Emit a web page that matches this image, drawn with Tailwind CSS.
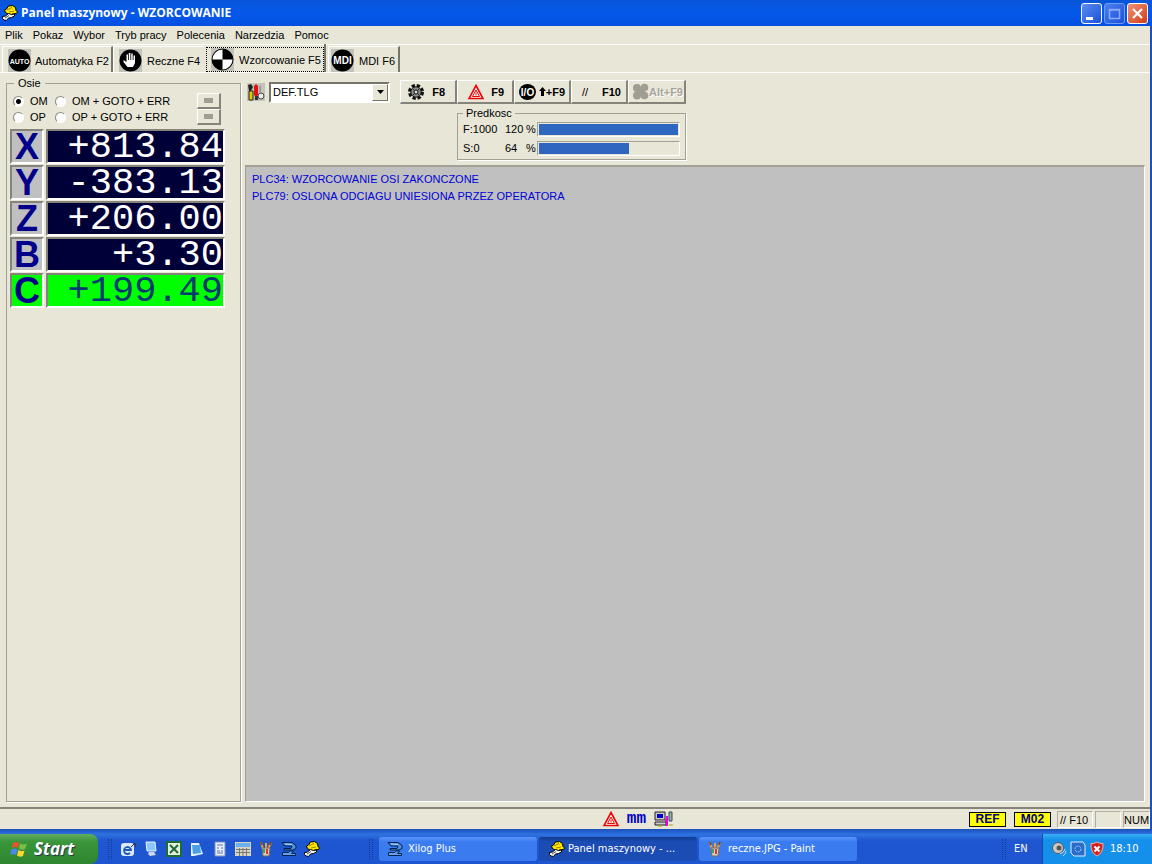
<!DOCTYPE html>
<html lang="pl">
<head>
<meta charset="utf-8">
<title>Panel maszynowy - WZORCOWANIE</title>
<script src="https://cdn.jsdelivr.net/npm/@tailwindcss/browser@4"></script>
</head>
<body class="flex h-screen flex-col overflow-hidden bg-[#e8e6d7] font-['Liberation_Sans',Arial,sans-serif] text-[11px] leading-4 text-black">

<svg class="hidden" aria-hidden="true">
  <symbol id="helmet" viewBox="0 0 16 16">
    <path d="M3.500 7.500 2.500 5l2-1 2-3 4-.5 3 2 .5 3 1.500 1.500-1 1.500-4 .5-2 1.500z" fill="#ffe800" stroke="#000"/>
    <path d="M5 5l4-2M7 7l5-1M9 1.500l1 2" stroke="#a88000" fill="none"/>
    <path d="M.5 13.500v-2l3-.5 3-2.500 3 1 3-.5v2l-3 1.500-3 .5-2 2.500-2.500-.5z" fill="#f4f4f4" stroke="#000"/>
    <path d="M3 13l4-2.500" stroke="#555"/>
  </symbol>
  <symbol id="xilog" viewBox="0 0 16 16">
    <path d="M1 1.500h10l4 3v3l-3 1.500H3V7.500h7L11 5H4z" fill="#4f93dc" stroke="#01204f"/>
    <path d="M1.500 11.500h6l2-1.500h3l-2 2.500h4v2h-13z" fill="#5fa4ea" stroke="#01204f"/>
    <path d="M4 3l7 .5" stroke="#a8d8ff"/>
  </symbol>
  <symbol id="brushes" viewBox="0 0 16 16">
    <path d="M5 8 3 1M8 8V2M10 8l3-6" stroke="#e8a040" stroke-width="2"/>
    <path d="M3 1l1 3M13 1l-1 3" stroke="#7a4a20" stroke-width="2"/>
    <path d="M4 7h8l-1 8H5z" fill="#d8cfc0" stroke="#7c6a58"/>
    <path d="M6 8v4" stroke="#3a6" stroke-width="2"/><path d="M9 8v5" stroke="#d33" stroke-width="2"/>
  </symbol>
  <symbol id="warn" viewBox="0 0 16 16">
    <path d="M8 1.500 15 14.500H1z" fill="#fff" stroke="#e00" stroke-width="1.600"/>
    <path d="M8 6 11.500 12.500h-7z" fill="none" stroke="#e00"/>
    <path d="M8 8.500v3" stroke="#e00"/>
  </symbol>
</svg>

<!-- Title bar -->
<header class="flex h-[26px] shrink-0 items-center bg-linear-to-b from-[#0a55d8] via-[#0458ea] to-[#0250e0] pr-1 pl-0.5">
  <svg class="size-4"><use href="#helmet"/></svg>
  <h1 class="ml-[3px] flex-1 font-['Open_Sans','Noto_Sans',sans-serif] text-[12px] font-bold text-white">Panel maszynowy - WZORCOWANIE</h1>
  <div class="flex gap-0.5">
    <button aria-label="Minimalizuj" class="size-[21px] rounded-[3px] border border-white bg-linear-to-br from-[#5a8cf0] to-[#1c50d8]">
      <svg viewBox="0 0 19 19"><path d="M4 13h7v3H4z" fill="#fff"/></svg></button>
    <button aria-label="Maksymalizuj" class="size-[21px] rounded-[3px] border border-[#6f9cf5] bg-linear-to-br from-[#4a80ee] to-[#1c50d8]">
      <svg viewBox="0 0 19 19"><path d="M4.500 5.500h10v9h-10zM4 6h11" fill="none" stroke="#8faaf5" stroke-width="1.500"/></svg></button>
    <button aria-label="Zamknij" class="size-[21px] rounded-[3px] border border-white bg-linear-to-br from-[#f09070] to-[#d03a10]">
      <svg viewBox="0 0 19 19"><path d="M5 5l9 9M14 5l-9 9" stroke="#fff" stroke-width="2.200"/></svg></button>
  </div>
</header>

<div class="flex min-h-0 flex-1 flex-col border-r-2 border-[#1c4fc0]">
  <!-- Menu -->
  <nav class="flex h-[19px] shrink-0 items-center gap-2.5 border-b border-white pl-[5px]">
    <button>Plik</button><button>Pokaz</button><button>Wybor</button><button>Tryb pracy</button><button>Polecenia</button><button>Narzedzia</button><button>Pomoc</button>
  </nav>

  <!-- Mode tabs -->
  <div role="tablist" class="flex h-7 shrink-0 items-end border-b border-white pl-0.5">
    <button role="tab" class="flex h-[26px] w-[111px] items-center gap-1 border-t border-r-2 border-l border-t-white border-r-[#77756b] border-l-white pt-0.5 pl-[5px]">
      <svg class="size-[23px]" viewBox="0 0 23 23"><path d="M0 0h23v23H0z" fill="#c3c2ba"/><circle cx="11.500" cy="11.500" r="11" fill="#000"/><text x="11.500" y="14.500" text-anchor="middle" font-size="7" font-weight="bold" fill="#fff">AUTO</text></svg>
      Automatyka F2</button>
    <button role="tab" class="flex h-[26px] w-[91px] items-center gap-[5px] border-t border-l border-white pt-0.5 pl-[5px]">
      <svg class="size-[23px]" viewBox="0 0 23 23"><path d="M0 0h23v23H0z" fill="#c3c2ba"/><circle cx="11.500" cy="11.500" r="11" fill="#000"/><path d="M8.500 18 4.500 13v-2l3 2V5.500h1.500V11h.8V4h1.600v7h.8V4.500h1.500V11h.8V6.500H16V14l-2 4z" fill="#fff"/></svg>
      Reczne F4</button>
    <button role="tab" aria-selected="true" class="mr-0.5 flex h-7 w-[122px] items-start border-r-2 border-[#77756b] pt-[3px] pl-0.5">
      <span class="flex h-[25px] w-[118px] items-center gap-[5px] border border-dotted border-black pl-1">
      <svg class="size-[23px]" viewBox="0 0 23 23"><path d="M0 0h23v23H0z" fill="#c3c2ba"/><circle cx="11.500" cy="11.500" r="10.500" fill="#000" stroke="#000"/><path d="M11.500 1.500a10 10 0 0 0-10 10h10zM11.500 21.500a10 10 0 0 0 10-10h-10z" fill="#fff"/></svg>
      Wzorcowanie F5</span></button>
    <button role="tab" class="flex h-[26px] w-[72px] items-center gap-[5px] border-t border-r-2 border-l border-t-white border-r-[#77756b] border-l-white pt-0.5 pl-0.5">
      <svg class="size-[23px]" viewBox="0 0 23 23"><path d="M0 0h23v23H0z" fill="#c3c2ba"/><circle cx="11.500" cy="11.500" r="11" fill="#000"/><text x="11.500" y="15" text-anchor="middle" font-size="10" font-weight="bold" fill="#fff">MDI</text></svg>
      MDI F6</button>
  </div>

  <main class="flex min-h-0 flex-1 gap-1 border-b-2 border-[#85837a] pt-1 pr-[5px] pb-[5px] pl-1.5">
    <!-- Axes -->
    <fieldset class="flex w-[235px] shrink-0 flex-col border border-[#a3a196] px-[3px] pb-1 shadow-[1px_1px_0_#fff]">
      <legend class="ml-1 px-1 leading-3">Osie</legend>
      <div class="mt-1 flex justify-between pr-4 pl-[3px]">
        <div class="grid grid-cols-[42px_auto]">
          <label class="flex items-center gap-[6px]"><input type="radio" name="os" checked class="size-[11px] appearance-none rounded-full border border-[#8b897e] border-r-white border-b-white bg-white checked:bg-[radial-gradient(#000_2px,#fff_3px)]">OM</label>
          <label class="flex items-center gap-[6px]"><input type="radio" name="os" class="size-[11px] appearance-none rounded-full border border-[#8b897e] border-r-white border-b-white bg-white checked:bg-[radial-gradient(#000_2px,#fff_3px)]">OM + GOTO + ERR</label>
          <label class="flex items-center gap-[6px]"><input type="radio" name="os" class="size-[11px] appearance-none rounded-full border border-[#8b897e] border-r-white border-b-white bg-white checked:bg-[radial-gradient(#000_2px,#fff_3px)]">OP</label>
          <label class="flex items-center gap-[6px]"><input type="radio" name="os" class="size-[11px] appearance-none rounded-full border border-[#8b897e] border-r-white border-b-white bg-white checked:bg-[radial-gradient(#000_2px,#fff_3px)]">OP + GOTO + ERR</label>
        </div>
        <div class="flex flex-col">
          <button aria-label="Oś w górę" class="flex h-4 w-6 items-center justify-center border-r-2 border-b-2 border-l border-t border-t-white border-l-white border-r-[#85837a] border-b-[#85837a]"><span class="h-[5px] w-[9px] bg-[#a09e93]"></span></button>
          <button aria-label="Oś w dół" class="flex h-4 w-6 items-center justify-center border-r-2 border-b-2 border-l border-t border-t-white border-l-white border-r-[#85837a] border-b-[#85837a]"><span class="h-[5px] w-[9px] bg-[#a09e93]"></span></button>
        </div>
      </div>
      <div class="mt-1 grid w-[215px] grid-cols-[34px_auto] gap-x-0.5 gap-y-px text-[#00008a]">
        <div class="flex h-[35px] items-center justify-center border-2 border-[#85837a] border-r-white border-b-white bg-[#c0c0c0] text-[36px] leading-8 font-bold">X</div>
        <div class="flex h-[35px] items-center justify-end border-2 border-[#85837a] border-r-white border-b-white bg-[#000038] font-['Liberation_Mono',monospace] text-[37px] leading-8 text-white">+813.84</div>
        <div class="flex h-[35px] items-center justify-center border-2 border-[#85837a] border-r-white border-b-white bg-[#c0c0c0] text-[36px] leading-8 font-bold">Y</div>
        <div class="flex h-[35px] items-center justify-end border-2 border-[#85837a] border-r-white border-b-white bg-[#000038] font-['Liberation_Mono',monospace] text-[37px] leading-8 text-white">-383.13</div>
        <div class="flex h-[35px] items-center justify-center border-2 border-[#85837a] border-r-white border-b-white bg-[#c0c0c0] text-[36px] leading-8 font-bold">Z</div>
        <div class="flex h-[35px] items-center justify-end border-2 border-[#85837a] border-r-white border-b-white bg-[#000038] font-['Liberation_Mono',monospace] text-[37px] leading-8 text-white">+206.00</div>
        <div class="flex h-[35px] items-center justify-center border-2 border-[#85837a] border-r-white border-b-white bg-[#c0c0c0] text-[36px] leading-8 font-bold">B</div>
        <div class="flex h-[35px] items-center justify-end border-2 border-[#85837a] border-r-white border-b-white bg-[#000038] font-['Liberation_Mono',monospace] text-[37px] leading-8 text-white">+3.30</div>
        <div class="flex h-[35px] items-center justify-center border-2 border-[#85837a] border-r-white border-b-white bg-[#00ff00] text-[36px] leading-8 font-bold">C</div>
        <div class="flex h-[35px] items-center justify-end border-2 border-[#85837a] border-r-white border-b-white bg-[#00ff00] font-['Liberation_Mono',monospace] text-[37px] leading-8 text-[#003a70]">+199.49</div>
      </div>
    </fieldset>

    <section class="flex min-w-0 flex-1 flex-col">
      <!-- Toolbar -->
      <div class="mt-[3px] flex h-6 shrink-0 items-center pl-0.5">
        <svg class="size-[18px]" viewBox="0 0 18 18"><path d="M0 0h18v18H0z" fill="#c6c4ba"/><path d="M1 2l3-1 2 3-2 4H2z" fill="#222"/><path d="M2 8h4v9H2z" fill="#dc0" stroke="#222"/><path d="M7 3l2-2 2 2v9l-2 2-2-2z" fill="#e01010"/><path d="M8 13h3v4H8z" fill="#333"/><circle cx="14" cy="13" r="3" fill="#eee" stroke="#444"/><path d="M13 3v6" stroke="#777" stroke-width="1"/></svg>
        <div class="relative ml-1 w-[121px]">
          <select aria-label="Plik narzędzi" class="block h-[21px] w-full appearance-none border-2 border-[#77756b] border-r-white border-b-white bg-white pl-0.5 text-[11px] leading-4"><option>DEF.TLG</option></select>
          <span class="pointer-events-none absolute top-0.5 right-0.5 flex h-[17px] w-4 items-center justify-center border border-white border-r-[#77756b] border-b-[#77756b] bg-[#e8e6d7]"><svg class="h-1 w-[7px]" viewBox="0 0 7 4"><path d="M0 0h7L3.500 4z"/></svg></span>
        </div>
        <div class="ml-2.5 flex font-bold">
          <button class="flex h-6 w-[57px] items-center justify-between border-t border-r-2 border-b-2 border-l border-t-white border-r-[#85837a] border-b-[#85837a] border-l-white pr-2.5 pl-[7px]"><svg class="size-4" viewBox="0 0 16 16"><circle cx="8" cy="8" r="6.500" fill="none" stroke="#111" stroke-width="3" stroke-dasharray="3.300 1.800"/><circle cx="8" cy="8" r="5.200" fill="#888" stroke="#111"/><path d="M5 5l6 6M11 5l-6 6" stroke="#222"/><circle cx="8" cy="8" r="2" fill="#ddd" stroke="#111"/></svg>F8</button>
          <button class="flex h-6 w-[57px] items-center justify-between border-t border-r-2 border-b-2 border-l border-t-white border-r-[#85837a] border-b-[#85837a] border-l-white pr-2 pl-2.5"><svg class="size-4"><use href="#warn"/></svg>F9</button>
          <button class="flex h-6 w-[57px] items-center justify-between border-t border-r-2 border-b-2 border-l border-t-white border-r-[#85837a] border-b-[#85837a] border-l-white pr-1 pl-1"><svg class="h-4 w-[17px]" viewBox="0 0 17 16"><ellipse cx="8.500" cy="8" rx="8.500" ry="8"/><text x="8.500" y="11.500" text-anchor="middle" font-size="10" font-weight="bold" fill="#fff">I/O</text></svg><span class="flex items-center"><svg class="h-[9px] w-[7px]" viewBox="0 0 7 9"><path d="M3.500 0 7 4H5v5H2V4H0z"/></svg>+F9</span></button>
          <button class="flex h-6 w-[57px] items-center justify-between border-t border-r-2 border-b-2 border-l border-t-white border-r-[#85837a] border-b-[#85837a] border-l-white pr-[5px] pl-2.5"><span class="font-normal">//</span>F10</button>
          <button disabled class="flex h-6 w-[58px] items-center justify-between border-t border-r-2 border-b-2 border-l border-t-white border-r-[#85837a] border-b-[#85837a] border-l-white pr-px pl-[3px] text-[#a6a498] [text-shadow:1px_1px_0_#fff]"><svg class="size-[17px]" viewBox="0 0 17 17" fill="#a09e93"><circle cx="5" cy="5" r="4"/><circle cx="12.500" cy="4.500" r="3.800"/><circle cx="5" cy="12.500" r="4"/><circle cx="12.500" cy="12.500" r="3.800"/><path d="M5 5h8v8H5z"/></svg><span>Alt+F9</span></button>
        </div>
      </div>

      <!-- Speeds -->
      <fieldset class="mt-[3px] ml-[212px] h-[53px] w-[228px] shrink-0 border border-[#a3a196] px-[5px] shadow-[1px_1px_0_#fff]">
        <legend class="px-[3px] leading-3">Predkosc</legend>
        <div class="mt-0.5 grid grid-cols-[42px_21px_11px_143px] items-center gap-y-[3px]">
          <span>F:1000</span><span>120</span><span>%</span>
          <div role="progressbar" aria-label="F" aria-valuenow="120" aria-valuemax="120" class="h-[15px] border border-[#a3a196] border-r-white border-b-white p-px"><div class="h-full bg-[#2f66c0]" style="width:100%"></div></div>
          <span>S:0</span><span>64</span><span>%</span>
          <div role="progressbar" aria-label="S" aria-valuenow="64" class="h-[15px] border border-[#a3a196] border-r-white border-b-white p-px"><div class="h-full bg-[#2f66c0]" style="width:65%"></div></div>
        </div>
      </fieldset>

      <!-- PLC messages -->
      <div role="log" class="mt-[5px] flex-1 border-t-2 border-r border-b border-l border-[#a3a196] border-r-white border-b-white bg-[#c0c0c0] pt-1 pl-1.5 leading-[17px] text-[#0000d8]">
        <p>PLC34: WZORCOWANIE OSI ZAKONCZONE</p>
        <p>PLC79: OSLONA ODCIAGU UNIESIONA PRZEZ OPERATORA</p>
      </div>
    </section>
  </main>

  <!-- Status bar -->
  <footer class="flex h-5 shrink-0 items-center">
    <div class="flex flex-1 items-center justify-end gap-2">
      <svg class="size-4"><use href="#warn"/></svg>
      <span class="font-['Liberation_Mono',monospace] text-[16px] leading-5 font-bold text-[#0000c8]">mm</span>
      <svg class="h-4 w-5" viewBox="0 0 20 16"><path d="M1 1h10v8H1z" fill="#c8c8c0" stroke="#222"/><path d="M3 3h6v4H3z" fill="#00c"/><path d="M1 11h11v3H1z" fill="#ccc" stroke="#222"/><path d="M15 1h3v9h-3z" fill="#9aa" stroke="#355"/><path d="M13 15V5M13 10h-2" stroke="#e0e" stroke-width="2"/><path d="M4 15h4M15 14h4" stroke="#aa0"/></svg>
    </div>
    <div class="flex w-[476px] items-center justify-end">
      <span class="mr-2 flex h-[15px] w-[37px] items-center justify-center border border-black bg-[#ffff00] text-[12px] font-bold text-[#00007a]">REF</span>
      <span class="mr-1.5 flex h-[15px] w-[37px] items-center justify-center border border-black bg-[#ffff00] text-[12px] font-bold text-[#00007a]">M02</span>
      <span class="mr-0.5 h-[17px] w-9 border border-[#b0aea2] border-r-white border-b-white pl-0.5 leading-4">// F10</span>
      <span class="mr-0.5 h-[17px] w-[26px] border border-[#b0aea2] border-r-white border-b-white"></span>
      <span class="h-[17px] w-[27px] border border-[#b0aea2] border-r-white border-b-white leading-4">NUM</span>
    </div>
  </footer>
</div>

<!-- Taskbar -->
<div class="flex h-[35px] shrink-0 items-end bg-linear-to-b from-[#1b50b8] via-[#2e72e0] via-15% to-[#1e55d0] to-35% font-['DejaVu_Sans_Condensed','DejaVu_Sans',sans-serif] text-white">
  <button class="flex h-[30px] w-[98px] items-center gap-1.5 rounded-r-lg bg-linear-to-b from-[#62ac62] via-[#3a963a] via-25% to-[#2f8530] pl-2.5 font-['Open_Sans',sans-serif] text-[17px] font-bold italic [text-shadow:1px_1px_1px_#234]">
    <svg class="size-[18px]" viewBox="0 0 18 18"><path d="M3 3q3-2 6 0L8 8Q5 6 2 8z" fill="#e8532a"/><path d="M10 3.500q3 2 7 0L15 9q-3 1.500-6-.5z" fill="#7ac043"/><path d="M1.500 9.500q3-2 6 0L6 15q-3-2-6 0z" fill="#4a88f0"/><path d="M8.500 10q3 2 6 .5L13 16q-3 1.500-6-.5z" fill="#ffd52a"/></svg>
    Start</button>
  <div class="flex h-[30px] w-[281px] items-center pl-2.5">
    <span class="mr-2 h-5 w-1 border-x border-dotted border-[#123c9c]"></span>
    <div class="flex items-center gap-[7px]">
      <button aria-label="Internet"><svg class="size-4" viewBox="0 0 16 16"><rect x="1" y="2" width="13" height="13" rx="3" fill="#dce9fb"/><path d="M4 9h7a3.500 3.500 0 1 0-1 3" fill="none" stroke="#1c5bb0" stroke-width="1.800"/><path d="M11 6l4-4v4" stroke="#234" fill="none"/></svg></button>
      <button aria-label="Pulpit"><svg class="size-4" viewBox="0 0 16 16"><path d="M3 1h9l1 9H4z" fill="#8cc6ff" stroke="#e6f3ff"/><path d="M6 11h5l2 3-6 1-2-2z" fill="#cfd8e4"/></svg></button>
      <button aria-label="Excel"><svg class="size-4" viewBox="0 0 16 16"><path d="M1 1h14v14H1z" fill="#e4f0df" stroke="#1f6b34" stroke-width="2"/><path d="M4 4l8 8M12 4l-8 8" stroke="#1f6b34" stroke-width="2"/></svg></button>
      <button aria-label="Notatnik"><svg class="size-4" viewBox="0 0 16 16"><path d="M2 2h8l4 11-9 2H2z" fill="#e5f1fb"/><path d="M3 4h8l1 8-8 1z" fill="#4aa0e0"/></svg></button>
      <button aria-label="Dokument"><svg class="size-4" viewBox="0 0 16 16"><path d="M3 1h10v14H3z" fill="#e8edf8" stroke="#7a8fc0"/><path d="M5 4h6M5 7h2M9 7h2M5 10h3M9 10h2M5 12h6" stroke="#5578b8"/></svg></button>
      <button aria-label="Kalkulator"><svg class="size-4" viewBox="0 0 16 16"><path d="M0 1h16v14H0z" fill="#d8d4c0"/><path d="M1 2h14v4H1z" fill="#6ab0f0"/><path d="M1 8.500h14M1 11.500h14M4.500 7v8M8 7v8M11.500 7v8" stroke="#777"/></svg></button>
      <button aria-label="Paint"><svg class="size-4"><use href="#brushes"/></svg></button>
      <button aria-label="Xilog"><svg class="size-4"><use href="#xilog"/></svg></button>
      <button aria-label="Panel"><svg class="size-4"><use href="#helmet"/></svg></button>
    </div>
    <span class="ml-auto mr-1.5 h-5 w-1 border-x border-dotted border-[#123c9c]"></span>
  </div>
  <div class="flex h-[30px] flex-1 items-start gap-0.5 pt-[3px]">
    <button class="flex h-6 w-[158px] items-center gap-[5px] rounded-[3px] bg-linear-to-b from-[#5b97f8] to-[#3a7bf0] to-20% pl-2"><svg class="size-4"><use href="#xilog"/></svg>Xilog Plus</button>
    <button class="flex h-6 w-[158px] items-center gap-[3px] rounded-[3px] bg-linear-to-b from-[#123c90] to-[#1a4cb4] to-20% pl-2.5"><svg class="size-4"><use href="#helmet"/></svg>Panel maszynowy - ...</button>
    <button class="flex h-6 w-[158px] items-center gap-[5px] rounded-[3px] bg-linear-to-b from-[#5b97f8] to-[#3a7bf0] to-20% pl-2"><svg class="size-4"><use href="#brushes"/></svg>reczne.JPG - Paint</button>
  </div>
  <div class="flex h-[30px] w-10 items-center"><span class="mr-2 h-5 w-1 border-x border-dotted border-[#123c9c]"></span><span>EN</span></div>
  <div class="flex h-[30px] w-[110px] items-center gap-[3px] border-l border-[#0c4fb0] bg-linear-to-b from-[#36b0f4] to-[#1590ea] to-20% pl-2">
    <svg class="size-4" viewBox="0 0 16 16"><circle cx="7" cy="7" r="5.500" fill="#c9c9c4" stroke="#555"/><circle cx="8" cy="7" r="2.500" fill="#555"/><path d="M9 13q4-1 5-5M12 15q3-2 3-5" stroke="#bdf" fill="none"/></svg>
    <svg class="size-4" viewBox="0 0 16 16"><path d="M1 1h12l2 3v11H4l-3-3z" fill="#2a6cc8" stroke="#e0ecff"/><circle cx="8" cy="8" r="3" fill="none" stroke="#9cf" stroke-dasharray="2 1"/></svg>
    <svg class="size-4" viewBox="0 0 16 16"><path d="M8 1q3 2 6 1.500Q14.500 12 8 15 1.500 12 2 2.500 5 3 8 1z" fill="#d8201c" stroke="#e9b0a8"/><path d="M5.500 5.500l5 5M10.500 5.500l-5 5" stroke="#fff" stroke-width="2"/></svg>
    <time class="ml-0.5">18:10</time>
  </div>
</div>
</body>
</html>
